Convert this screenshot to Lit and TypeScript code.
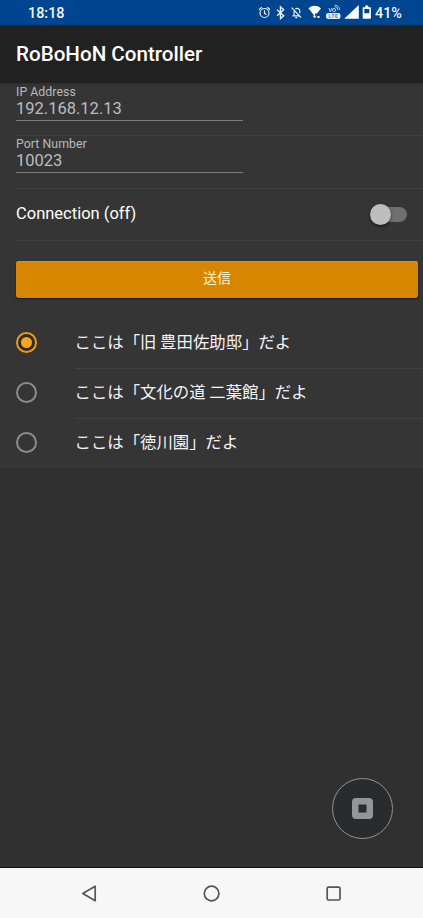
import { LitElement, html, css } from "lit";
import { customElement, property, state } from "lit/decorators.js";
import { classMap } from "lit/directives/class-map.js";

@customElement("status-bar")
class StatusBar extends LitElement {
  static styles = css`
    :host {
      display: flex;
      justify-content: space-between;
      height: 25px;
      box-sizing: border-box;
      padding: 0 20px 0 28px;
      background: #00458f;
      color: #f3f7fb;
      font: 500 14.4px/27px Roboto, "Noto Sans", sans-serif;
    }
    svg { display: block; flex: none; }
    .right { display: flex; }
    .icons { width: 117px; height: 25px; }
    .time, .pct { white-space: nowrap; }
    .pct { width: 28px; }
  `;
  render() {
    return html`
      <span class="time">18:18</span>
      <span class="right">
        <svg class="icons" viewBox="258 0 117 25" fill="none" stroke="#e8f0f8" stroke-width="1.2">
          <circle cx="264.5" cy="13" r="4.5" />
          <path d="M264.5 10.3v3l2 1.2M259 9.7l2.8-2.4M270 9.7l-2.8-2.4" />
          <path stroke-width="1.4" d="M277.1 9.7l6.6 6-3.2 2.9V6.8l3.2 2.9-6.6 6" />
          <path d="M292.5 15.8h7.6M294 15.6v-4.4M295.2 9.1c2-1.6 4.6-.3 4.6 2.2v2M291.6 7.6l9.4 9.9" />
          <path d="M295.3 17.6h2" />
          <path fill="#fff" stroke="none" d="M308.4 8.2q6.3-4.8 12.6 0l-4 5.2h-2v3.2z" />
          <path fill="#fff" stroke="none" d="M312.6 15.8l2 2.5 2-2.5zM317.5 16h2v2h-2z" />
          <rect x="326" y="12.9" width="14.5" height="6" rx="2.2" fill="#e5edf6" stroke="none" />
          <path stroke-width=".8" d="M328.8 8l1.5 3.7L331.8 8M334.5 6.6q3.2.3 3.4 3.5M334.8 5.2q4.4.2 4.8 4.6" />
          <circle cx="334" cy="10" r="1.6" stroke-width=".8" />
          <path stroke="#4d7db1" stroke-width=".8" d="M329.2 14.2v3.3h2M331.8 14.5h2.6M333.1 14.5v3.3M337.7 14.5h-2v3h2M335.7 16h1.7" />
          <path fill="#fff" stroke="none" d="M344.2 18.8L358.8 5v13.8z" />
          <path fill="#fff" fill-rule="evenodd" stroke="none" d="M363.2 7.2h2.1V5.6h3v1.6h2.1q.5 0 .5.5v10.4q0 .7-.7.7h-6.8q-.7 0-.7-.7V7.7q0-.5.5-.5zM364.3 9v4.3h5V9z" />
        </svg>
        <span class="pct">41%</span>
      </span>`;
  }
}

@customElement("text-field")
class TextField extends LitElement {
  @property() label = "";
  @property() value = "";
  static styles = css`
    :host {
      display: block;
      box-sizing: border-box;
      height: 53px;
      margin-left: 16px;
      border-bottom: 1px solid #3f3f3f;
    }
    .field { width: 227px; height: 37px; box-sizing: border-box; border-bottom: 1px solid #7c7c7c; }
    .label { color: #bababa; font-size: 12.3px; line-height: 17px; letter-spacing: .05px; }
    .value { color: #bdbdbd; font-size: 16.5px; line-height: 15px; }
  `;
  render() {
    return html`<div class="field">
      <div class="label">${this.label}</div>
      <div class="value">${this.value}</div>
    </div>`;
  }
}

@customElement("radio-item")
class RadioItem extends LitElement {
  @property() label = "";
  @property({ type: Boolean }) checked = false;
  static styles = css`
    :host { display: flex; align-items: center; height: 50px; padding-left: 16px; }
    .ring {
      width: 21px; height: 21px; box-sizing: border-box; flex: none;
      margin-bottom: 4px;
      border: 2px solid #8c8c8c; border-radius: 50%;
      display: grid; place-items: center;
    }
    .ring.on { border-color: #e79c20; background: #302a1f; }
    .dot { width: 11px; height: 11px; border-radius: 50%; background: #ffa51a; }
    .text {
      flex: 1; height: 100%; box-sizing: border-box; margin-left: 37.5px;
      border-bottom: 1px solid #414141; line-height: 44px; white-space: nowrap;
      color: #f4f4f4; font-size: 16.4px;
      font-family: "Noto Sans CJK JP", Roboto, sans-serif;
    }
    :host(:last-of-type) .text { border-bottom-color: transparent; }
  `;
  render() {
    return html`<span class=${classMap({ ring: true, on: this.checked })}>
        ${this.checked ? html`<span class="dot"></span>` : ""}
      </span>
      <span class="text">${this.label}</span>`;
  }
}

@customElement("app-root")
class AppRoot extends LitElement {
  @state() private selected = 0;
  private phrases = [
    "ここは「旧 豊田佐助邸」だよ",
    "ここは「文化の道 二葉館」だよ",
    "ここは「徳川園」だよ",
  ];
  static styles = css`
    :host {
      position: relative;
      display: flex; flex-direction: column;
      width: 100%; height: 918px; overflow: hidden;
      background: #303030; color: #fff;
      font-family: Roboto, "Noto Sans CJK JP", sans-serif;
    }
    status-bar, header, nav { flex: none; }
    header {
      height: 57px; box-sizing: border-box; padding-left: 16px;
      background: #212121; border-top: 1px solid #24272c;
      font-size: 20.6px; font-weight: 500; line-height: 56px;
      box-shadow: 0 1px 2px #1b1b1b; z-index: 1;
    }
    .list { background: #353535; height: 386px; display: flex; flex-direction: column; }
    .list > * { flex: none; }
    text-field:first-child { height: 54px; padding-top: 2px; }
    .connection {
      display: flex; align-items: center; justify-content: space-between;
      height: 52px; box-sizing: border-box; margin-left: 16px; padding: 0 15px 0 0;
      border-bottom: 1px solid #3f3f3f; font-size: 16.5px;
    }
    .connection-label { padding-bottom: 2px; }
    .track {
      display: flex; align-items: center; width: 35px; height: 15px;
      margin-right: 1px; border-radius: 8px; background: #707070;
    }
    .thumb {
      width: 21px; height: 21px; margin-left: -2px; border-radius: 50%;
      background: #bebebe; box-shadow: 0 1.5px 3px rgba(0, 0, 0, .55);
    }
    .send {
      height: 37px; margin: 20px 5px 21px 16px; padding: 0 0 2px; border: 0; border-radius: 3px;
      background: #d68600; color: #fff0d0; font: 400 14px/35px Roboto, "Noto Sans CJK JP", sans-serif;
      box-shadow: 0 1px 2px #171717, inset 0 1px #d8931f;
    }
    .float {
      position: absolute; right: 30px; top: 778px; width: 61px; height: 61px;
    }
    .space { flex: 1; }
    nav {
      height: 50px; box-sizing: border-box; background: #f7f7f7;
      box-shadow: 0 -1px #0c0c0c;
    }
    svg { display: block; }
  `;
  render() {
    return html`
      <status-bar></status-bar>
      <header>RoBoHoN Controller</header>
      <main class="list">
        <text-field label="IP Address" value="192.168.12.13"></text-field>
        <text-field label="Port Number" value="10023"></text-field>
        <div class="connection">
          <span class="connection-label">Connection (off)</span>
          <span class="track"><span class="thumb"></span></span>
        </div>
        <button class="send">送信</button>
        ${this.phrases.map(
          (p, i) => html`<radio-item
            .label=${p}
            .checked=${i === this.selected}
            @click=${() => (this.selected = i)}
          ></radio-item>`
        )}
      </main>
      <div class="space"></div>
      <svg class="float" viewBox="0 0 61 61">
        <circle cx="30.5" cy="30.5" r="30" fill="#292b2d" stroke="#929292" />
        <path fill="#949597" fill-rule="evenodd" d="M24 20h13q4 0 4 4v13q0 4-4 4H24q-4 0-4-4V24q0-4 4-4zM26.5 26.5v8h8v-8z" />
      </svg>
      <nav>
        <svg width="423" height="50" fill="none" stroke="#565656" stroke-width="1.7" stroke-linejoin="round">
          <path d="M95.2 18.3v14.4l-12.4-7.2z" />
          <circle cx="211.6" cy="25.5" r="7.3" />
          <rect x="327.2" y="19.2" width="12.8" height="12.8" rx="1.2" />
        </svg>
      </nav>`;
  }
}
